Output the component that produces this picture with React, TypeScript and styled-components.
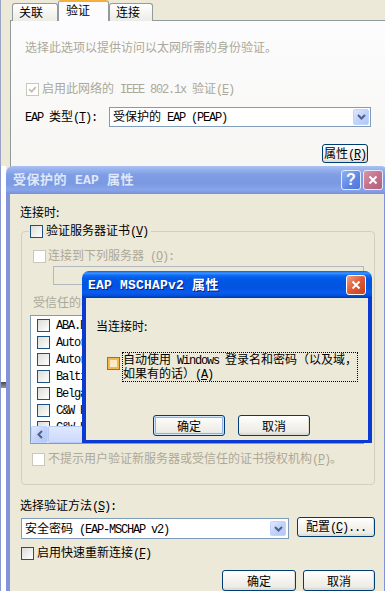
import React from 'react';
import styled, { createGlobalStyle, css } from 'styled-components';

type BoxState = 'normal' | 'disabled' | 'hot';

const certificates = [
  'ABA.ECOM Root CA',
  'Autoridad Certificadora de la Asociacion Nacional del Notariado Mexicano',
  'Autoridad Certificadora del Colegio Nacional de Correduria Publica Mexicana',
  'Baltimore EZ by DST',
  'Belgacom E-Trust Primary CA',
  'C&W HKT SecureNet CA Class A',
  'C&W HKT SecureNet CA Class B',
];

// 小图标
const CheckMark: React.FC<{ color: string }> = ({ color }) => (
  <svg width="9" height="9" viewBox="0 0 9 9">
    <path d="M1.2 4.2 L3.6 6.6 L7.8 2.2" fill="none" stroke={color} strokeWidth="1.8" />
  </svg>
);

const DownChevron = () => (
  <svg width="9" height="6" viewBox="0 0 9 6">
    <path d="M1 1 L4.5 4.5 L8 1" fill="none" stroke="#4d6185" strokeWidth="2" />
  </svg>
);

const LeftChevron = () => (
  <svg width="6" height="9" viewBox="0 0 6 9">
    <path d="M5 1 L1.5 4.5 L5 8" fill="none" stroke="#4d6185" strokeWidth="2" />
  </svg>
);

const CloseGlyph = () => (
  <svg width="10" height="10" viewBox="0 0 10 10">
    <path d="M1.5 1.5 L8.5 8.5 M8.5 1.5 L1.5 8.5" stroke="#fff" strokeWidth="2" />
  </svg>
);

const App: React.FC = () => {
  return (
    <>
      <GlobalStyle />
      <Desktop>
        {/* 底层：本地连接属性 - 验证 */}
        <Sheet $x={0} $y={0} $w={400} $h={170}>
          <TabStrip>
            <Tab $w={46}>关联</Tab>
            <Tab $w={51} $active>
              验证
            </Tab>
            <Tab $w={44}>连接</Tab>
          </TabStrip>
          <TabPanel>
            <Hint>选择此选项以提供访问以太网所需的身份验证。</Hint>
            <EnableRow $muted>
              <CheckBox $state="disabled">
                <CheckMark color="#c2bfb0" />
              </CheckBox>
              <span>
                启用此网络的<Latin> IEEE 802.1x </Latin>验证<Latin>(<u>E</u>)</Latin>
              </span>
            </EnableRow>
            <EapRow>
              <FieldLabel>
                <Latin>EAP </Latin>类型<Latin>(<u>T</u>):</Latin>
              </FieldLabel>
              <Combo $h={20}>
                <ComboText>
                  受保护的<Latin> EAP (PEAP)</Latin>
                </ComboText>
                <DropButton>
                  <DownChevron />
                </DropButton>
              </Combo>
            </EapRow>
            <PropsRow>
              <XPButton $w={46} $h={19}>
                属性<Latin>(<u>R</u>)</Latin>
              </XPButton>
            </PropsRow>
          </TabPanel>
        </Sheet>

        <HiddenWindow>
          <HiddenBar />
        </HiddenWindow>

        {/* 受保护的 EAP 属性 */}
        <Window $x={6} $y={166} $w={382} $h={440}>
          <TitleBar $h={28}>
            <TitleText>
              受保护的<Latin> EAP </Latin>属性
            </TitleText>
            <CaptionButtons>
              <CaptionButton $kind="help">?</CaptionButton>
              <CaptionButton $kind="close">
                <CloseGlyph />
              </CaptionButton>
            </CaptionButtons>
          </TitleBar>
          <Frame>
            <PeapBody>
              <div>连接时:</div>
              <Group>
                <GroupLegend>
                  <CheckRow>
                    <CheckBox />
                    <span>
                      验证服务器证书<Latin>(<u>V</u>)</Latin>
                    </span>
                  </CheckRow>
                </GroupLegend>
                <IndentRow $muted>
                  <CheckBox $state="disabled" />
                  <span>
                    连接到下列服务器<Latin> (<u>O</u>):</Latin>
                  </span>
                </IndentRow>
                <DisabledEdit />
                <GroupCaption>
                  受信任的根证书颁发机构<Latin>(<u>R</u>):</Latin>
                </GroupCaption>
                <CertList>
                  <CertItems>
                    {certificates.map((name) => (
                      <CertItem key={name}>
                        <CheckBox />
                        <span>{name}</span>
                      </CertItem>
                    ))}
                  </CertItems>
                  <HScroll>
                    <ScrollArrow>
                      <LeftChevron />
                    </ScrollArrow>
                    <ScrollThumb />
                    <ScrollTrack />
                  </HScroll>
                </CertList>
                <NoPromptRow $muted>
                  <CheckBox $state="disabled" />
                  <span>
                    不提示用户验证新服务器或受信任的证书授权机构<Latin>(<u>P</u>)</Latin>。
                  </span>
                </NoPromptRow>
              </Group>

              <MethodLabel>
                选择验证方法<Latin>(<u>S</u>):</Latin>
              </MethodLabel>
              <MethodRow>
                <MethodCombo $h={21}>
                  <ComboText>
                    安全密码<Latin> (EAP-MSCHAP v2)</Latin>
                  </ComboText>
                  <DropButton>
                    <DownChevron />
                  </DropButton>
                </MethodCombo>
                <XPButton $w={78} $h={20}>
                  配置<Latin>(<u>C</u>)...</Latin>
                </XPButton>
              </MethodRow>
              <FastRow>
                <CheckBox />
                <span>
                  启用快速重新连接<Latin>(<u>F</u>)</Latin>
                </span>
              </FastRow>
              <DialogButtons>
                <XPButton $w={74} $h={21}>
                  确定
                </XPButton>
                <XPButton $w={72} $h={21}>
                  取消
                </XPButton>
              </DialogButtons>
            </PeapBody>
          </Frame>
        </Window>

        {/* EAP MSCHAPv2 属性 */}
        <Window $x={82} $y={271} $w={290} $h={172}>
          <TitleBar $h={27} $active>
            <TitleText $active>
              <Latin>EAP MSCHAPv2 </Latin>属性
            </TitleText>
            <CaptionButton $kind="close" $active>
              <CloseGlyph />
            </CaptionButton>
          </TitleBar>
          <Frame $active>
            <MsBody>
              <div>当连接时:</div>
              <AutoLogonRow>
                <HotBox $state="hot" />
                <FocusLabel>
                  自动使用<Latin> Windows </Latin>登录名和密码（以及域，
                  <br />
                  如果有的话）<Latin>(<u>A</u>)</Latin>
                </FocusLabel>
              </AutoLogonRow>
              <MsButtons>
                <XPButton $w={72} $h={21} $default>
                  确定
                </XPButton>
                <XPButton $w={72} $h={21}>
                  取消
                </XPButton>
              </MsButtons>
            </MsBody>
          </Frame>
        </Window>
      </Desktop>
    </>
  );
};

const GlobalStyle = createGlobalStyle`
  html, body {
    margin: 0;
    padding: 0;
    background: #ffffff;
  }
  body {
    font-family: "Noto Sans CJK SC", "Noto Sans", sans-serif;
    font-size: 12px;
    line-height: 14px;
    color: #000;
  }
  *, *::before, *::after {
    box-sizing: border-box;
  }
`;

const Desktop = styled.div`
  position: relative;
  width: 385px;
  height: 591px;
  overflow: hidden;
  background: #ffffff;
`;

const Window = styled.div<{ $x: number; $y: number; $w: number; $h: number }>`
  position: absolute;
  left: ${(p) => p.$x}px;
  top: ${(p) => p.$y}px;
  width: ${(p) => p.$w}px;
  height: ${(p) => p.$h}px;
  display: flex;
  flex-direction: column;
`;

const Latin = styled.span`
  font-family: "Liberation Mono", "DejaVu Sans Mono", monospace;
  font-size: 12px;
  letter-spacing: -1.2px;
`;

// 底层属性页
const Sheet = styled(Window)`
  background: #ece9d8;
  border-left: 1px solid #9aa3c6;
`;

const TabStrip = styled.div`
  display: flex;
  align-items: flex-end;
  height: 21px;
  padding-left: 11px;
  margin-bottom: -1px;
  position: relative;
  z-index: 1;
`;

const Tab = styled.div<{ $w: number; $active?: boolean }>`
  width: ${(p) => p.$w}px;
  height: 18px;
  padding: 1px 0 0 6px;
  border: 1px solid #919b9c;
  border-bottom: none;
  border-radius: 3px 3px 0 0;
  background: linear-gradient(#ffffff, #ecebe6);
  white-space: nowrap;
  ${(p) =>
    p.$active &&
    css`
      height: 21px;
      padding: 1px 0 0 7px;
      border-top: 2px solid #f5b03a;
      background: #fcfcfe;
    `}
`;

const TabPanel = styled.div`
  flex: 1;
  margin-left: 9px;
  border: 1px solid #919b9c;
  background: linear-gradient(#fcfcfe, #f7f6f2);
  padding: 19px 28px 0 14px;
  display: flex;
  flex-direction: column;
`;

const Hint = styled.div`
  color: #aca899;
  white-space: nowrap;
`;

const CheckRow = styled.div<{ $muted?: boolean }>`
  display: flex;
  align-items: center;
  gap: 3px;
  height: 14px;
  white-space: nowrap;
  color: ${(p) => (p.$muted ? '#aca899' : '#000')};
`;

const EnableRow = styled(CheckRow)`
  margin: 28px 0 0 1px;
`;

const EapRow = styled.div`
  display: flex;
  align-items: center;
  margin-top: 11px;
`;

const FieldLabel = styled.div`
  flex: 0 0 84px;
  white-space: nowrap;
`;

const Combo = styled.div<{ $h: number }>`
  flex: 1;
  display: flex;
  align-items: center;
  height: ${(p) => p.$h}px;
  border: 1px solid #7f9db9;
  background: #ffffff;
  padding: 1px 1px 1px 3px;
`;

const ComboText = styled.div`
  flex: 1;
  white-space: nowrap;
`;

const DropButton = styled.span`
  flex: none;
  width: 16px;
  height: 100%;
  display: flex;
  align-items: center;
  justify-content: center;
  border: 1px solid #c3d3fd;
  border-radius: 2px;
  background: linear-gradient(135deg, #e0e8fe, #c1d3fb 50%, #b2c7f7);
`;

const PropsRow = styled.div`
  display: flex;
  justify-content: flex-end;
  margin-top: 17px;
  padding-right: 3px;
`;

const XPButton = styled.button<{ $w: number; $h: number; $default?: boolean }>`
  width: ${(p) => p.$w}px;
  height: ${(p) => p.$h}px;
  padding: 0;
  font-family: "Noto Sans CJK SC", "Noto Sans", sans-serif;
  font-size: 12px;
  line-height: 14px;
  color: #000;
  border: 1px solid #003c74;
  border-radius: 3px;
  background: linear-gradient(#ffffff 0%, #f5f4ef 45%, #ecebe6 85%, #d6d0c5 100%);
  box-shadow: ${(p) =>
    p.$default
      ? 'inset 0 0 0 1px #cee7ff, inset 0 0 0 2px #8eb0ee'
      : 'inset -1px -1px 0 #e0ddd3'};
  white-space: nowrap;
`;

const HiddenWindow = styled.div`
  position: absolute;
  left: 0;
  top: 166px;
  width: 6px;
  height: 425px;
  background: #ffffff;
  border-left: 1px solid #8b98cc;
`;

const HiddenBar = styled.div`
  margin-top: 216px;
  height: 6px;
  background: linear-gradient(#4a4a4a, #9a9a9a);
`;

// 窗口标题栏
const TitleBar = styled.div<{ $h: number; $active?: boolean }>`
  flex: none;
  height: ${(p) => p.$h}px;
  display: flex;
  align-items: center;
  padding: 0 ${(p) => (p.$active ? 6 : 5)}px 0 ${(p) => (p.$active ? 6 : 7)}px;
  border-radius: 7px 7px 0 0;
  background: ${(p) =>
    p.$active
      ? 'linear-gradient(#0a5ae6 0%, #3d95ff 8%, #0e6cf5 16%, #0058e6 30%, #0054e0 60%, #0a5bef 80%, #0050d8 92%, #0036a4 100%)'
      : 'linear-gradient(#abc1f1 0%, #97b2ee 12%, #7f9de4 32%, #7b99e2 62%, #88a5ea 85%, #7690d8 100%)'};
`;

const TitleText = styled.div<{ $active?: boolean }>`
  flex: 1;
  font-size: 13px;
  font-weight: bold;
  letter-spacing: 0.5px;
  white-space: nowrap;
  color: ${(p) => (p.$active ? '#ffffff' : '#dfe7f8')};
  text-shadow: ${(p) => (p.$active ? '1px 1px #0a1883' : 'none')};

  ${Latin} {
    font-size: 13px;
    font-weight: bold;
    letter-spacing: 0.2px;
  }
`;

const CaptionButtons = styled.div`
  display: flex;
  gap: 2px;
`;

const CaptionButton = styled.span<{ $kind: 'help' | 'close'; $active?: boolean }>`
  width: 20px;
  height: 20px;
  display: flex;
  align-items: center;
  justify-content: center;
  border: 1px solid ${(p) => (p.$active ? '#ffffff' : '#e4ebfb')};
  border-radius: 3px;
  color: #ffffff;
  font-family: "Liberation Sans", Arial, sans-serif;
  font-size: 16px;
  font-weight: bold;
  background: ${(p) =>
    p.$kind === 'help'
      ? 'linear-gradient(135deg, #8fb0f2, #5d86e3 60%, #4f78d8)'
      : p.$active
        ? 'linear-gradient(135deg, #f3a183, #dd5a35 50%, #c6401d)'
        : 'linear-gradient(135deg, #d894a6, #c0708a 55%, #b0617c)'};
`;

const Frame = styled.div<{ $active?: boolean }>`
  flex: 1;
  min-height: 0;
  display: flex;
  flex-direction: column;
  background: #ece9d8;
  border: solid ${(p) => (p.$active ? '#0b3ad3' : '#8293da')};
  border-width: 0 4px ${(p) => (p.$active ? 3 : 4)}px 4px;
`;

// 受保护的 EAP 属性内容
const PeapBody = styled.div`
  display: flex;
  flex-direction: column;
  padding: 11px 9px 0 10px;
`;

const Group = styled.fieldset`
  margin: 5px 0 0 1px;
  padding: 11px 10px 18px 8px;
  border: 1px solid #d0d0bf;
  border-radius: 4px;
  min-width: 0;
  display: flex;
  flex-direction: column;
`;

const GroupLegend = styled.legend`
  padding: 0 3px 0 1px;
  margin-left: -1px;
`;

const IndentRow = styled(CheckRow)`
  margin-left: 3px;
  gap: 2px;
`;

const DisabledEdit = styled.div`
  margin: 3px 0 0 23px;
  height: 19px;
  border: 1px solid #b3b8c0;
  background: #ece9d8;
`;

const GroupCaption = styled.div`
  margin: 10px 0 0 3px;
  color: #aca899;
  white-space: nowrap;
`;

const CertList = styled.div`
  margin-top: 4px;
  height: 129px;
  border: 1px solid #7f9db9;
  background: #ffffff;
  display: flex;
  flex-direction: column;
`;

const CertItems = styled.div`
  flex: 1;
  min-height: 0;
  overflow: hidden;
  padding: 1px 0 0 6px;
`;

const CertItem = styled.div`
  display: flex;
  align-items: center;
  gap: 6px;
  height: 17px;
  white-space: nowrap;
  font-family: "Liberation Mono", "DejaVu Sans Mono", monospace;
  font-size: 12px;
  letter-spacing: -1.2px;
`;

const HScroll = styled.div`
  flex: none;
  height: 17px;
  display: flex;
  background: #f4f3ee;
`;

const ScrollArrow = styled.span`
  width: 17px;
  height: 17px;
  display: flex;
  align-items: center;
  justify-content: center;
  border: 1px solid #c3d3fd;
  border-radius: 2px;
  background: linear-gradient(135deg, #e0e8fe, #c1d3fb 50%, #b2c7f7);
`;

const ScrollThumb = styled.span`
  width: 150px;
  height: 17px;
  border: 1px solid #b8cbf7;
  border-radius: 2px;
  background: linear-gradient(#dfe8fd, #cbd9fb);
`;

const ScrollTrack = styled.span`
  flex: 1;
`;

const NoPromptRow = styled(CheckRow)`
  margin: 8px 0 0 2px;
`;

const MethodLabel = styled.div`
  margin-top: 13px;
  white-space: nowrap;
`;

const MethodRow = styled.div`
  display: flex;
  align-items: flex-start;
  gap: 8px;
  margin: 3px 0 0 1px;
`;

const MethodCombo = styled(Combo)`
  flex: 0 0 268px;
  margin-top: 1px;
  padding: 2px 2px 2px 3px;
`;

const FastRow = styled(CheckRow)`
  margin: 7px 0 0 1px;
`;

const DialogButtons = styled.div`
  display: flex;
  justify-content: flex-end;
  gap: 7px;
  margin-top: 10px;
`;

// MSCHAPv2 内容
const MsBody = styled.div`
  display: flex;
  flex-direction: column;
  padding: 21px 0 0 10px;
`;

const AutoLogonRow = styled.div`
  display: flex;
  align-items: flex-start;
  gap: 2px;
  margin: 19px 0 0 11px;
`;

const CheckBox = styled.span<{ $state?: BoxState }>`
  flex: none;
  width: 13px;
  height: 13px;
  display: inline-flex;
  align-items: center;
  justify-content: center;
  border: 1px solid #1c5180;
  background: linear-gradient(135deg, #dcdcd7, #ffffff);
  ${(p) =>
    p.$state === 'disabled' &&
    css`
      border-color: #cac8bb;
      background: #ffffff;
    `}
  ${(p) =>
    p.$state === 'hot' &&
    css`
      border-color: #8a7448;
      background: #fbecc8;
      box-shadow: inset 0 0 0 2px #f4b84c;
    `}
`;

const HotBox = styled(CheckBox)`
  margin-top: 5px;
`;

const FocusLabel = styled.div`
  width: 236px;
  border: 1px dotted #000;
  line-height: 12px;
  white-space: nowrap;
`;

const MsButtons = styled.div`
  display: flex;
  gap: 13px;
  margin: 33px 0 0 57px;
`;

export default App;
